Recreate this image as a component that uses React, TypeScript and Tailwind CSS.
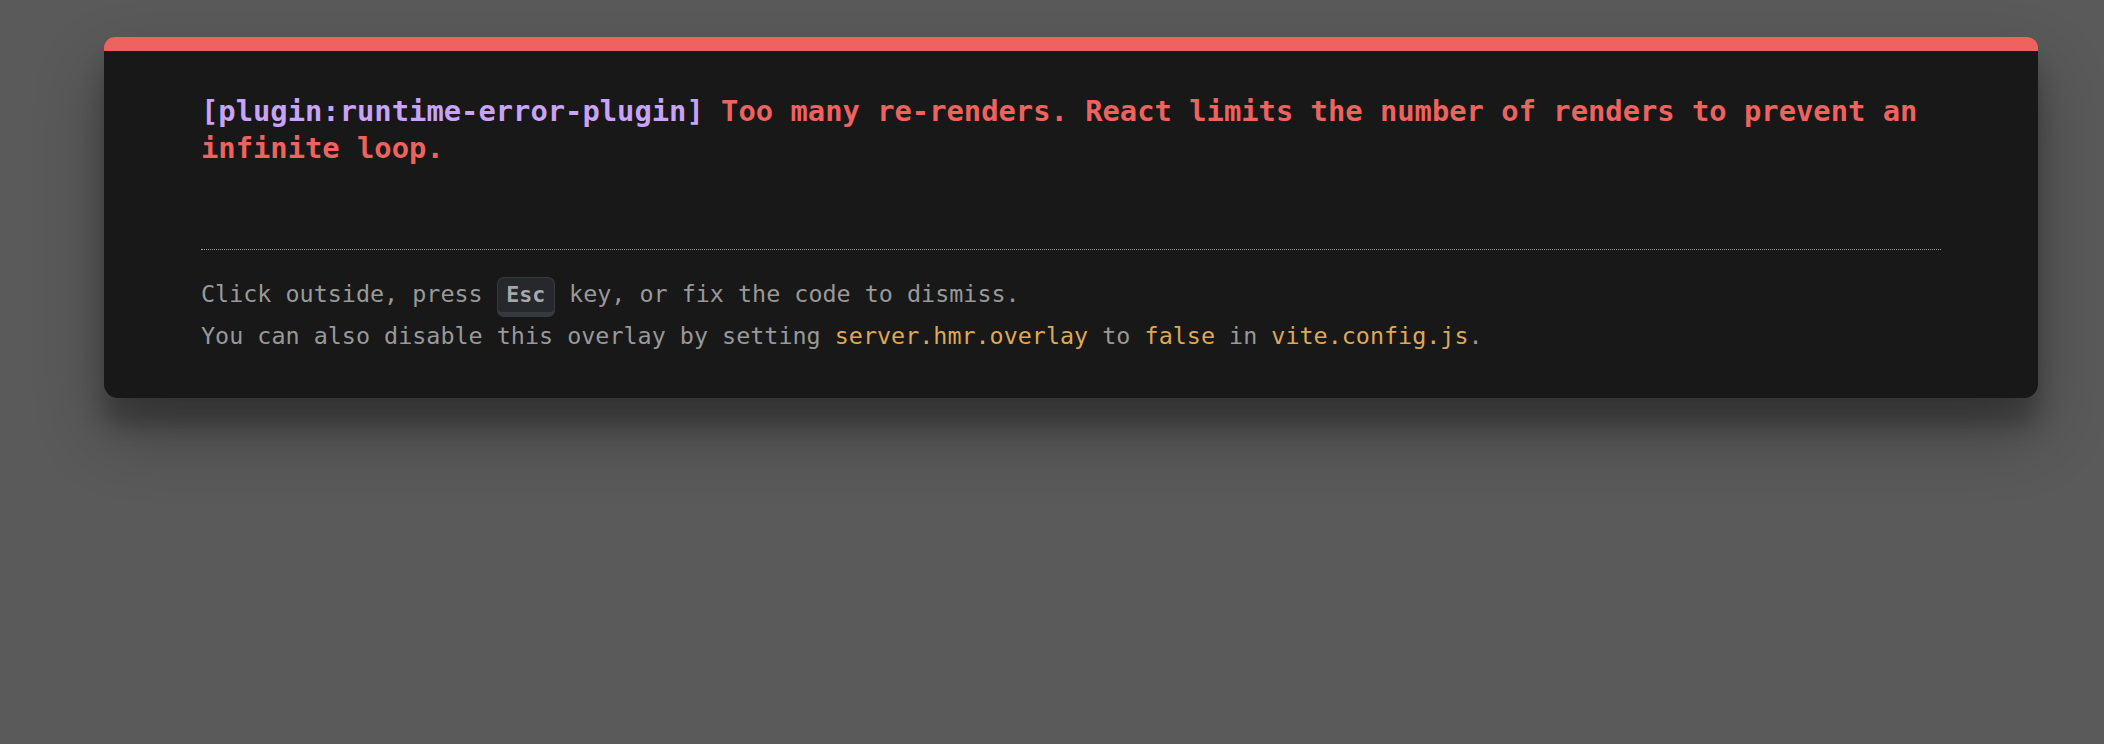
import React from 'react';

const ErrorOverlay: React.FC = () => {
    return (
        <div className="ml-[104px] mt-[37px] w-[1934px] rounded-t-[11px] rounded-b-[14px] border-t-[14px] border-[#ee635e] bg-[#181818] px-[97px] pt-[42px] pb-[41px] font-['DejaVu_Sans_Mono','Liberation_Mono',monospace] text-[#d8d8d8] shadow-[0_34px_68px_rgba(0,0,0,0.3),0_27px_22px_rgba(0,0,0,0.22)]">
            {/* message */}
            <pre className="m-0 whitespace-pre-wrap font-['DejaVu_Sans_Mono','Liberation_Mono',monospace] text-[28.8px] font-bold leading-[1.3] text-[#ee635e]">
                <span className="text-[#c9a3f7]">[plugin:runtime-error-plugin]</span> Too many re-renders. React limits the number of renders to prevent an infinite loop.
            </pre>

            {/* tip */}
            <div className="mt-[81px] border-t border-dotted border-[#999] pt-[23.4px] text-[23.4px] leading-[1.8] text-[#999]">
                Click outside, press{' '}
                <kbd className="rounded-[7px] border-x border-t border-b-[5px] border-[rgb(54,57,64)] bg-[rgb(38,40,44)] px-[8.6px] py-[4.3px] font-['DejaVu_Sans_Mono','Liberation_Mono',monospace] text-[21.6px] font-bold leading-[1.5] text-[rgb(166,167,171)]">
                    Esc
                </kbd>{' '}
                key, or fix the code to dismiss.
                <br />
                You can also disable this overlay by setting{' '}
                <code className="font-['DejaVu_Sans_Mono','Liberation_Mono',monospace] text-[#dea855]">server.hmr.overlay</code> to{' '}
                <code className="font-['DejaVu_Sans_Mono','Liberation_Mono',monospace] text-[#dea855]">false</code> in{' '}
                <code className="font-['DejaVu_Sans_Mono','Liberation_Mono',monospace] text-[#dea855]">vite.config.js</code>.
            </div>
        </div>
    );
};

export default function App() {
    return (
        <div className="min-h-[744px] w-full overflow-hidden bg-[#5a5a5a]">
            <ErrorOverlay />
        </div>
    );
}
